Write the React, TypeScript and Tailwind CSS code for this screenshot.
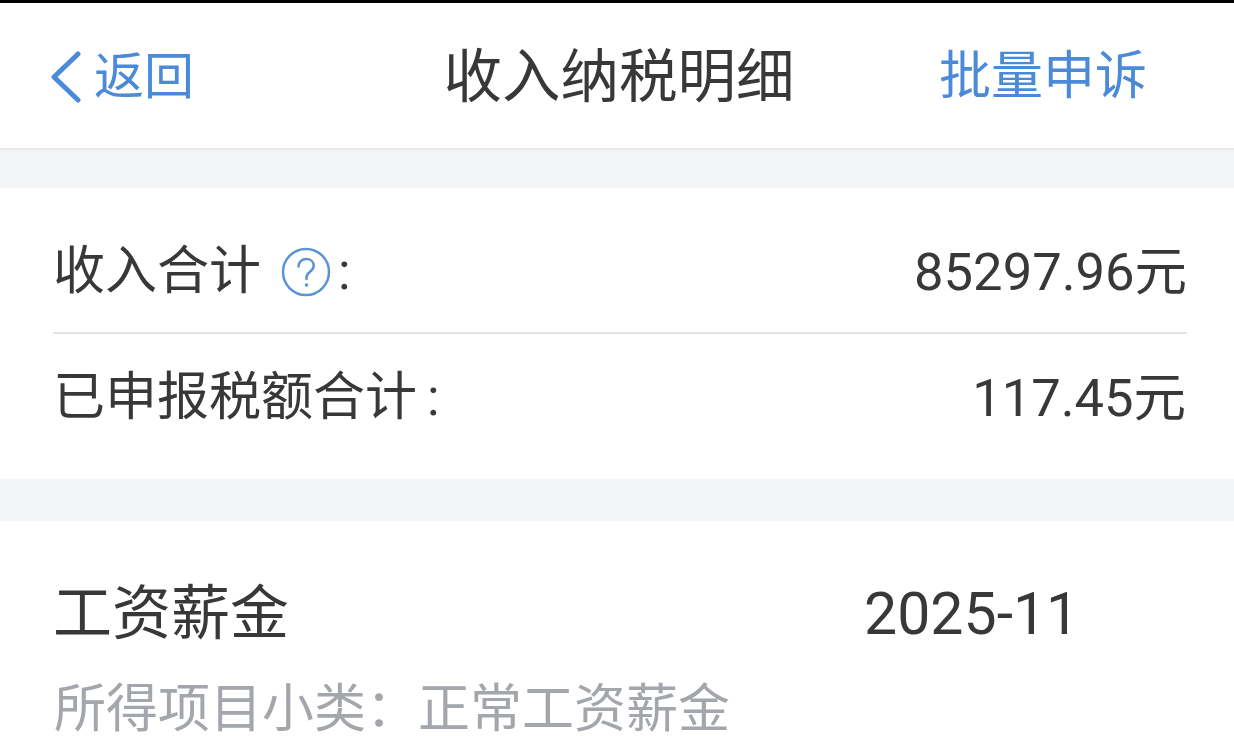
const FONT = "font-['Roboto','Noto_Sans_CJK_SC',sans-serif]";

function Row({ label, value, help }: { label: string; value: string; help?: boolean }) {
  return (
    <div className="flex h-[52px] items-center justify-between text-[52px] leading-none text-[#383838]">
      <div className="flex items-center">
        <span>{label}</span>
        {help ? (
          <svg className="ml-[20px] mr-[7px] h-[50px] w-[50px]" viewBox="0 0 50 50" fill="none">
            <circle cx="25" cy="25" r="23" stroke="#5b93d3" strokeWidth="2.5" />
            <path d="M17.5 19.5c0-4.500 3.300-7.500 7.700-7.500 4.400 0 7.500 2.800 7.500 6.700 0 3-1.700 4.600-3.900 6.300-2 1.500-3.300 2.900-3.300 5.500v1.500" stroke="#5b93d3" strokeWidth="2.500" strokeLinecap="round" />
            <circle cx="25.500" cy="38" r="1.800" fill="#5b93d3" />
          </svg>
        ) : (
          <span className="w-[10px]" />
        )}
        <span>:</span>
      </div>
      <div className="text-[52.500px]">{value}</div>
    </div>
  );
}

export default function App() {
  return (
    <div className={`${FONT} h-[745px] w-[1234px] overflow-hidden bg-[#f4f5f7]`}>
      <div className="h-[3px] bg-black" />
      <header className="grid h-[147px] grid-cols-[1fr_auto_1fr] items-center border-b-2 border-[#e8e8e8] bg-white pl-[50px] pr-[46px] pt-[3px]">
        <div className="flex items-center text-[#4a8ad8]">
          <svg className="h-[52px] w-[32px]" viewBox="0 0 32 52" fill="none">
            <path d="M28 3 4 26l24 23" stroke="currentColor" strokeWidth="5" strokeLinecap="round" strokeLinejoin="round" />
          </svg>
          <span className="ml-[12px] text-[50px] leading-none">返回</span>
        </div>
        <h1 className="text-[58.500px] font-normal leading-none text-[#383838]">收入纳税明细</h1>
        <div className="pr-[41px] text-right text-[52px] leading-none text-[#4a8ad8]">批量申诉</div>
      </header>
      <section className="mt-[38px] bg-white pt-[58px]">
        <div className="ml-[53px] mr-[47px] border-b-2 border-[#e4e4e4] pb-[34px]">
          <Row label="收入合计" value="85297.96元" help />
        </div>
        <div className="ml-[53px] mr-[48px] pb-[55px] pt-[38px]">
          <Row label="已申报税额合计" value="117.45元" />
        </div>
      </section>
      <section className="mt-[42px] h-[300px] bg-white pl-[53px] pt-[63px]">
        <div className="flex items-center leading-none text-[#383838]">
          <span className="w-[811px] text-[59px]">工资薪金</span>
          <span className="text-[59px]">2025-11</span>
        </div>
        <div className="ml-[1px] mt-[41px] text-[52px] leading-none text-[#a3a7ab]">所得项目小类：正常工资薪金</div>
      </section>
    </div>
  );
}
